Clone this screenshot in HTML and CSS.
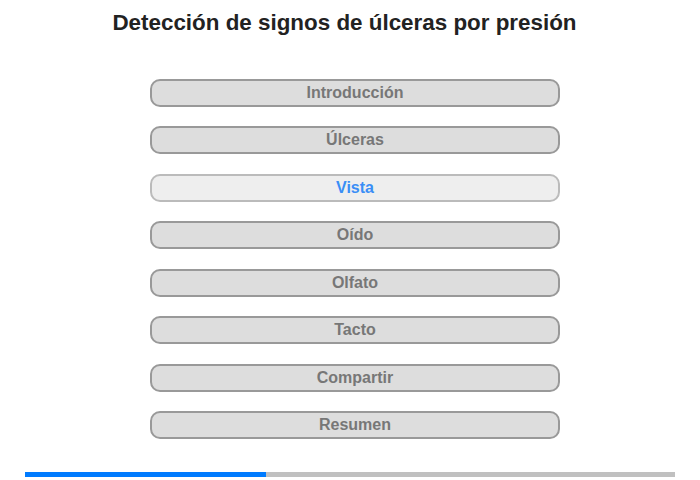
FILE: index.html
```html
<!DOCTYPE html>
<html lang="es">
<head>
    <meta charset="UTF-8">
    <meta name="viewport" content="width=device-width, initial-scale=1.0">
    <title>Detección de signos de úlceras por presión</title>
    <link rel="stylesheet" href="styles.css">
</head>
<body>

    <div class="page">
        <h1 class="title">Detección de signos de úlceras por presión</h1>

        <div class="menu">
            <button>Introducción</button>
            <button>Úlceras</button>
            <button class="active">Vista</button>
            <button>Oído</button>
            <button>Olfato</button>
            <button>Tacto</button>
            <button>Compartir</button>
            <button>Resumen</button>
        </div>

        <div class="progress">
            <div class="progress-fill" style="width: 37%"></div>
        </div>
    </div>

</body>
</html>
```

FILE: styles.css
```css
body {
    font-family: "Liberation Sans", Arial, sans-serif;
    margin: 0;
    background-color: #fff;
}
.page {
    width: 700px;
    height: 480px;
    padding-top: 10px;
    box-sizing: border-box;
}
.title {
    margin: 0 0 0 -11px;
    font-size: 22.4px;
    line-height: 26px;
    text-align: center;
    color: #222;
}
.menu {
    display: flex;
    flex-direction: column;
    gap: 19.43px;
    width: 410px;
    margin: 43px 0 0 150px;
}
.menu button {
    height: 28px;
    padding: 0;
    font-family: inherit;
    font-size: 16px;
    font-weight: bold;
    color: #777;
    background-color: #ddd;
    border: 2px solid #999;
    border-radius: 10px;
}
.menu button.active {
    color: #3a8ef6;
    background-color: #eee;
    border-color: #bbb;
}
.progress {
    width: 650px;
    height: 5px;
    margin: 33px 0 0 25px;
    background-color: #c0c0c0;
}
.progress-fill {
    height: 100%;
    background-color: #007bff;
}
```
